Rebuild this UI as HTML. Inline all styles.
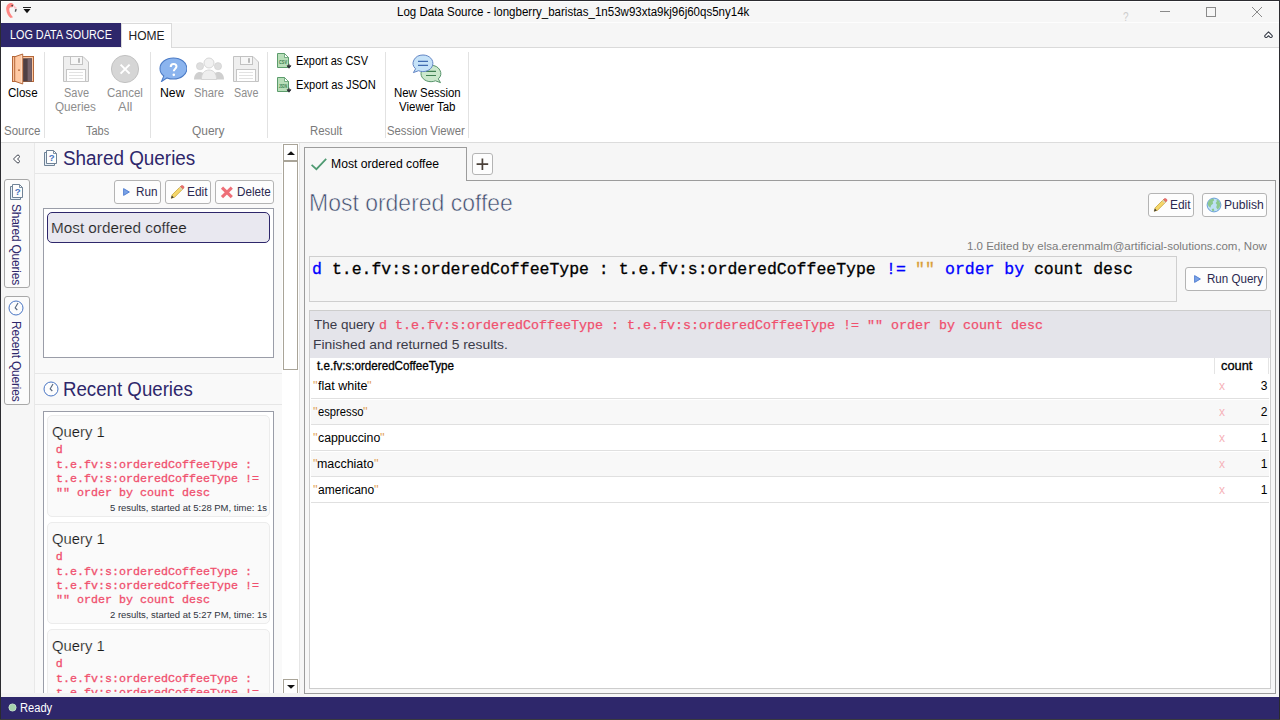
<!DOCTYPE html>
<html lang="en"><head><meta charset="utf-8"><title>Log Data Source</title>
<style>
html,body{margin:0;padding:0;}
body{width:1280px;height:720px;position:relative;overflow:hidden;background:#f6f6f6;font-family:"Liberation Sans",sans-serif;}
body>div,body>svg,body>span{position:absolute;box-sizing:border-box;}
span.t{white-space:pre;display:block;transform-origin:0 50%;}
</style></head>
<body>
<div style="left:0px;top:0px;width:1280px;height:720px;background:#f6f6f6;"></div>
<div style="left:1px;top:1px;width:1278px;height:1px;background:#fff;"></div>
<div style="left:1px;top:1px;width:1px;height:22px;background:#fff;"></div>
<div style="left:121px;top:22px;width:1158px;height:1px;background:#fdfdfd;"></div>
<div style="left:1px;top:23px;width:120px;height:24px;background:#2e276b;"></div>
<div style="left:121px;top:23px;width:51px;height:25px;background:#fff;border:1px solid #dadada;border-bottom:none;"></div>
<div style="left:172px;top:47px;width:1107px;height:1px;background:#dadada;"></div>
<div style="left:1px;top:48px;width:1278px;height:94px;background:#fff;"></div>
<div style="left:1px;top:142px;width:1278px;height:1px;background:#dcdcdc;"></div>
<div style="left:44px;top:52px;width:1px;height:86px;background:#e2e2e2;"></div>
<div style="left:150px;top:52px;width:1px;height:86px;background:#e2e2e2;"></div>
<div style="left:267px;top:52px;width:1px;height:86px;background:#e2e2e2;"></div>
<div style="left:385px;top:52px;width:1px;height:86px;background:#e2e2e2;"></div>
<div style="left:468px;top:52px;width:1px;height:86px;background:#e2e2e2;"></div>
<span class="t m" style="left:397.05px;top:1.84px;font:400 12px/20px 'Liberation Sans', sans-serif;color:#000;transform:scaleX(0.9603);">Log Data Source - longberry_baristas_1n53w93xta9kj96j60qs5ny14k</span>
<span class="t m" style="left:1123.09px;top:6.50px;font:400 13px/20px 'Liberation Sans', sans-serif;color:#cccccc;transform:scaleX(0.7719);">?</span>
<span class="t m" style="left:9.61px;top:24.84px;font:400 12px/20px 'Liberation Sans', sans-serif;color:#fff;transform:scaleX(0.9020);">LOG DATA SOURCE</span>
<span class="t m" style="left:128.52px;top:25.84px;font:400 12px/20px 'Liberation Sans', sans-serif;color:#222;transform:scaleX(1.0000);">HOME</span>
<span class="t m" style="left:7.91px;top:82.84px;font:400 12px/20px 'Liberation Sans', sans-serif;color:#000;transform:scaleX(0.9646);">Close</span>
<span class="t m" style="left:63.50px;top:82.84px;font:400 12px/20px 'Liberation Sans', sans-serif;color:#8d8d8d;transform:scaleX(0.9132);">Save</span>
<span class="t m" style="left:55.45px;top:97.44px;font:400 12px/20px 'Liberation Sans', sans-serif;color:#8d8d8d;transform:scaleX(0.9749);">Queries</span>
<span class="t m" style="left:107.42px;top:82.84px;font:400 12px/20px 'Liberation Sans', sans-serif;color:#8d8d8d;transform:scaleX(0.9597);">Cancel</span>
<span class="t m" style="left:117.97px;top:97.44px;font:400 12px/20px 'Liberation Sans', sans-serif;color:#8d8d8d;transform:scaleX(1.0785);">All</span>
<span class="t m" style="left:160.00px;top:82.84px;font:400 12px/20px 'Liberation Sans', sans-serif;color:#000;transform:scaleX(1.0191);">New</span>
<span class="t m" style="left:194.49px;top:82.84px;font:400 12px/20px 'Liberation Sans', sans-serif;color:#8d8d8d;transform:scaleX(0.9369);">Share</span>
<span class="t m" style="left:234.01px;top:82.84px;font:400 12px/20px 'Liberation Sans', sans-serif;color:#8d8d8d;transform:scaleX(0.8942);">Save</span>
<span class="t m" style="left:295.60px;top:50.84px;font:400 12px/20px 'Liberation Sans', sans-serif;color:#000;transform:scaleX(0.9142);">Export as CSV</span>
<span class="t m" style="left:295.59px;top:74.84px;font:400 12px/20px 'Liberation Sans', sans-serif;color:#000;transform:scaleX(0.9278);">Export as JSON</span>
<span class="t m" style="left:393.56px;top:82.84px;font:400 12px/20px 'Liberation Sans', sans-serif;color:#000;transform:scaleX(0.9521);">New Session</span>
<span class="t m" style="left:398.95px;top:97.44px;font:400 12px/20px 'Liberation Sans', sans-serif;color:#000;transform:scaleX(0.9592);">Viewer Tab</span>
<span class="t m" style="left:3.98px;top:120.84px;font:400 12px/20px 'Liberation Sans', sans-serif;color:#7a7a7a;transform:scaleX(0.9607);">Source</span>
<span class="t m" style="left:86.25px;top:120.84px;font:400 12px/20px 'Liberation Sans', sans-serif;color:#7a7a7a;transform:scaleX(0.9125);">Tabs</span>
<span class="t m" style="left:192.43px;top:120.84px;font:400 12px/20px 'Liberation Sans', sans-serif;color:#7a7a7a;transform:scaleX(0.9970);">Query</span>
<span class="t m" style="left:309.82px;top:120.84px;font:400 12px/20px 'Liberation Sans', sans-serif;color:#7a7a7a;transform:scaleX(0.9486);">Result</span>
<span class="t m" style="left:387.49px;top:120.84px;font:400 12px/20px 'Liberation Sans', sans-serif;color:#7a7a7a;transform:scaleX(0.9418);">Session Viewer</span>
<div style="left:1160px;top:11px;width:10px;height:1px;background:#8a8a8a;"></div>
<div style="left:1206px;top:7px;width:10px;height:10px;border:1px solid #8a8a8a;"></div>
<svg style="left:1251px;top:6px" width="12" height="12" viewBox="0 0 12 12"><path d="M1 1 L11 11 M11 1 L1 11" stroke="#8a8a8a" stroke-width="1" fill="none"/></svg>
<svg style="left:1263px;top:30px" width="11" height="9.3" viewBox="0 0 13 11"><path d="M6.5 2.2 L10.6 6.3 A1.6 1.6 0 0 1 8.2 8.4 L6.5 6.8 L4.8 8.4 A1.6 1.6 0 0 1 2.4 6.3 Z" fill="#fff" stroke="#3a3f4a" stroke-width="1.3" stroke-linejoin="round"/></svg>
<svg style="left:0px;top:0px" width="20" height="22" viewBox="0 0 20 22"><path d="M12.6 3.4 C9.2 2.2 6 5 6.2 9.2 C6.4 13 8.4 16.4 10.6 18 L13 17.2 C10.6 14.6 9.1 11.6 9.3 9.2 C9.4 7.8 10.2 7.3 11.2 7.3 C12.6 7.3 13.8 6.4 13.8 5.2 C13.8 4.3 13.4 3.7 12.6 3.4 Z" fill="#ff8683"/><path d="M13.6 5.2 L16.6 7.4 L16.6 9 L14 8.2 Z" fill="#ffc6cb"/><path d="M15 9.2 L16.8 9 L16.2 11.4 L14.8 12 Z" fill="#555"/><circle cx="12.2" cy="5.6" r="0.85" fill="#4a3a3a"/></svg>
<div style="left:23px;top:7px;width:8px;height:1px;background:#222;"></div>
<svg style="left:23px;top:9px" width="8" height="5" viewBox="0 0 8 5"><path d="M0.5 0 H7.5 L4 4.3 Z" fill="#111"/></svg>
<svg style="left:11px;top:53px" width="24" height="32" viewBox="0 0 24 32"><rect x="1.5" y="3.5" width="21" height="25" fill="#fcc6a0" stroke="#b5683a" stroke-width="1"/><rect x="12" y="5.3" width="9" height="23.2" fill="#4f4044"/><rect x="16.6" y="5.8" width="4.2" height="22.4" fill="#75626a"/><path d="M3.7 3.8 L11.7 1 V31 L3.7 28.2 Z" fill="#ffc9a3" stroke="#b5683a" stroke-width="1" stroke-linejoin="round"/><path d="M10.7 2.2 V29.8" stroke="#ffe2cf" stroke-width="0.8"/><rect x="7.2" y="16.4" width="1.6" height="1.6" fill="#b5683a"/></svg>
<svg style="left:63px;top:56px" width="26" height="26" viewBox="0 0 26 26"><path d="M0.5 0.5 H20 L25.5 6 V25.5 H0.5 Z" fill="#efefef" stroke="#c2c2c2" stroke-width="1"/><rect x="7.5" y="0.5" width="12" height="8" fill="#f7f7f7" stroke="#c2c2c2" stroke-width="1"/><rect x="15" y="2.2" width="2" height="4.6" fill="#b9b9b9"/><rect x="3.5" y="13.5" width="19" height="12" fill="#ffffff" stroke="#c6c6c6" stroke-width="1"/><path d="M6 16.5 H20 M6 19.5 H20 M6 22.5 H20" stroke="#e2e2e2" stroke-width="1"/></svg>
<svg style="left:233px;top:56px" width="26" height="26" viewBox="0 0 26 26"><path d="M0.5 0.5 H20 L25.5 6 V25.5 H0.5 Z" fill="#efefef" stroke="#c2c2c2" stroke-width="1"/><rect x="7.5" y="0.5" width="12" height="8" fill="#f7f7f7" stroke="#c2c2c2" stroke-width="1"/><rect x="15" y="2.2" width="2" height="4.6" fill="#b9b9b9"/><rect x="3.5" y="13.5" width="19" height="12" fill="#ffffff" stroke="#c6c6c6" stroke-width="1"/><path d="M6 16.5 H20 M6 19.5 H20 M6 22.5 H20" stroke="#e2e2e2" stroke-width="1"/></svg>
<svg style="left:110px;top:54px" width="30" height="30" viewBox="0 0 30 30"><circle cx="15" cy="15" r="13.6" fill="#d6d6d6" stroke="#c2c2c2" stroke-width="1"/><path d="M10.6 10.6 L19.6 19.6 M19.6 10.6 L10.6 19.6" stroke="#fff" stroke-width="2" stroke-linecap="butt"/></svg>
<svg style="left:158.6px;top:56.6px" width="28.8" height="25.9" viewBox="0 0 30 27"><path d="M15 1 C22.8 1 29 5.8 29 12 C29 18.2 22.8 23 15 23 C12.6 23 10.4 22.6 8.4 21.8 L2.6 25.6 L5 19.8 C2.4 17.8 1 15 1 12 C1 5.8 7.2 1 15 1 Z" fill="#8bb4ee" stroke="#4b7bc6" stroke-width="1.1"/><path d="M12.2 9.2 C12.2 7.2 13.4 6.2 15.2 6.2 C17 6.2 18.2 7.2 18.2 8.8 C18.2 10.8 15.4 11.2 15.4 13.6" stroke="#fff" stroke-width="2.1" fill="none" stroke-linecap="butt" transform="translate(0,1.2)"/><circle cx="15.4" cy="18.6" r="1.35" fill="#fff"/></svg>
<svg style="left:193px;top:57px" width="32" height="24" viewBox="0 0 32 24"><circle cx="7" cy="9.2" r="3.6" fill="#dedede" stroke="#cfcfcf" stroke-width="0.6"/><circle cx="25" cy="9.2" r="3.6" fill="#dedede" stroke="#cfcfcf" stroke-width="0.6"/><path d="M1 22.5 C1 17.5 3.6 15 7 15 C9 15 10.6 16 11.6 17.6 L11.6 22.5 Z" fill="#cfcfcf"/><path d="M31 22.5 C31 17.5 28.4 15 25 15 C23 15 21.4 16 20.4 17.6 L20.4 22.5 Z" fill="#cfcfcf"/><circle cx="16" cy="6" r="5" fill="#f1f1f1" stroke="#d2d2d2" stroke-width="0.9"/><path d="M8.4 22.5 C8.4 16.2 11.6 13 16 13 C20.4 13 23.6 16.2 23.6 22.5 Z" fill="#eeeeee" stroke="#d2d2d2" stroke-width="0.9"/></svg>
<svg style="left:277px;top:53px" width="16" height="17" viewBox="0 0 16 17"><path d="M0.5 0.5 H7.5 L11.5 4.5 V14.5 H0.5 Z" fill="#b9dfba" stroke="#5c9c6c" stroke-width="1"/><path d="M7.5 0.5 V4.5 H11.5 Z" fill="#ffffff" stroke="#5c9c6c" stroke-width="0.8" stroke-linejoin="round"/><text x="2" y="10.8" font-family="Liberation Sans, sans-serif" font-size="5.6" font-weight="700" fill="#357a48" textLength="8" lengthAdjust="spacingAndGlyphs">CSV</text><path d="M12 10.8 V13 M10 12.8 H14 L12 15.2 Z" stroke="#33363c" stroke-width="0.9" fill="#33363c"/></svg>
<svg style="left:277px;top:77px" width="16" height="17" viewBox="0 0 16 17"><path d="M0.5 0.5 H7.5 L11.5 4.5 V14.5 H0.5 Z" fill="#b9dfba" stroke="#5c9c6c" stroke-width="1"/><path d="M7.5 0.5 V4.5 H11.5 Z" fill="#ffffff" stroke="#5c9c6c" stroke-width="0.8" stroke-linejoin="round"/><text x="2" y="10.8" font-family="Liberation Sans, sans-serif" font-size="5.6" font-weight="700" fill="#357a48" textLength="8" lengthAdjust="spacingAndGlyphs">JSON</text><path d="M12 10.8 V13 M10 12.8 H14 L12 15.2 Z" stroke="#33363c" stroke-width="0.9" fill="#33363c"/></svg>
<svg style="left:412px;top:54px" width="30" height="30" viewBox="0 0 30 30"><path d="M18.9 11.3 A9.9 8.2 0 0 1 26.3 24.9 L28.5 28.6 L23.4 26.8 A9.9 8.2 0 1 1 18.9 11.3 Z" fill="#cbe8cc" stroke="#56936a" stroke-width="1"/><path d="M14 17.4 H24 M14 21.5 H24" stroke="#3f7f52" stroke-width="1.2"/><path d="M11 1 A9.9 8.3 0 1 1 6.5 16.7 L1.4 18.6 L3.6 14.8 A9.9 8.3 0 0 1 11 1 Z" fill="#c5e2f8" stroke="#6285c4" stroke-width="1"/><path d="M6 7.4 H16 M6 11.4 H16" stroke="#3f6ab0" stroke-width="1.2"/></svg>
<div style="left:1px;top:143px;width:34px;height:554px;background:#f6f6f6;"></div>
<div style="left:35px;top:143px;width:247px;height:554px;background:#f9f9f9;"></div>
<div style="left:34px;top:143px;width:1px;height:554px;background:#e8e8e8;"></div>
<div style="left:35px;top:173px;width:247px;height:1px;background:#e6e6e6;"></div>
<div style="left:35px;top:373px;width:247px;height:1px;background:#e6e6e6;"></div>
<div style="left:35px;top:404px;width:247px;height:1px;background:#e6e6e6;"></div>
<svg style="left:11.5px;top:154px" width="9" height="10" viewBox="0 0 10 11"><path d="M1.6 5.5 L5.6 1.6 A1.5 1.5 0 0 1 7.8 3.8 L6.2 5.5 L7.8 7.2 A1.5 1.5 0 0 1 5.6 9.4 Z" fill="#fff" stroke="#3a3f4a" stroke-width="1.1" stroke-linejoin="round"/></svg>
<div style="left:4px;top:179px;width:26px;height:109px;background:#fbfbfb;border:1px solid #a8a8a8;border-radius:3px;"></div>
<div style="left:4px;top:296px;width:26px;height:109px;background:#fbfbfb;border:1px solid #a8a8a8;border-radius:3px;"></div>
<svg style="left:10px;top:184px" width="14" height="16" viewBox="0 0 14 16"><path d="M2.5 2.5 H0.5 V15.5 H10.5 V13.5" fill="#e8f0f8" stroke="#6f8296" stroke-width="1"/><path d="M2.5 0.5 H9.5 L12.5 3.5 V13.5 H2.5 Z" fill="#fdfdfd" stroke="#6f8296" stroke-width="1"/><path d="M9.5 0.5 V3.5 H12.5" fill="none" stroke="#6f8296" stroke-width="0.9"/><text x="7.7" y="11.4" font-family="Liberation Sans, sans-serif" font-size="9.6" font-weight="700" fill="#4a74c0" text-anchor="middle">?</text></svg>
<svg style="left:44px;top:150px" width="14" height="16" viewBox="0 0 14 16"><path d="M2.5 2.5 H0.5 V15.5 H10.5 V13.5" fill="#e8f0f8" stroke="#6f8296" stroke-width="1"/><path d="M2.5 0.5 H9.5 L12.5 3.5 V13.5 H2.5 Z" fill="#fdfdfd" stroke="#6f8296" stroke-width="1"/><path d="M9.5 0.5 V3.5 H12.5" fill="none" stroke="#6f8296" stroke-width="0.9"/><text x="7.7" y="11.4" font-family="Liberation Sans, sans-serif" font-size="9.6" font-weight="700" fill="#4a74c0" text-anchor="middle">?</text></svg>
<svg style="left:8px;top:300px" width="16" height="16" viewBox="0 0 16 16"><circle cx="8" cy="8" r="7" fill="#fdfdfd" stroke="#4a76c4" stroke-width="1"/><path d="M10 3 L7.2 7.8 L9.3 10" fill="none" stroke="#5a6a80" stroke-width="1.2"/></svg>
<svg style="left:42.5px;top:380.5px" width="16" height="16" viewBox="0 0 16 16"><circle cx="8" cy="8" r="7" fill="#fdfdfd" stroke="#4a76c4" stroke-width="1"/><path d="M10 3 L7.2 7.8 L9.3 10" fill="none" stroke="#5a6a80" stroke-width="1.2"/></svg>
<span class="t" id="v1" style="left:12px;top:204px;font:400 12px/20px 'Liberation Sans', sans-serif;color:#2e276b;transform-origin:0 0;transform:translate(14.2px,0) rotate(90deg);letter-spacing:-0.22px;">Shared Queries</span>
<span class="t" id="v2" style="left:12px;top:321.3px;font:400 12px/20px 'Liberation Sans', sans-serif;color:#2e276b;transform-origin:0 0;transform:translate(14.2px,0) rotate(90deg);letter-spacing:-0.2px;">Recent Queries</span>
<span class="t m" style="left:62.89px;top:148.37px;font:400 20px/20px 'Liberation Sans', sans-serif;color:#2e276b;transform:scaleX(0.9444);">Shared Queries</span>
<span class="t m" style="left:62.72px;top:379.37px;font:400 20px/20px 'Liberation Sans', sans-serif;color:#2e276b;transform:scaleX(0.9337);">Recent Queries</span>
<div style="left:114px;top:180px;width:47px;height:24px;background:#fdfdfd;border:1px solid #b4b4b4;border-radius:3px;"></div>
<div style="left:165px;top:180px;width:46px;height:24px;background:#fdfdfd;border:1px solid #b4b4b4;border-radius:3px;"></div>
<div style="left:215px;top:180px;width:59px;height:24px;background:#fdfdfd;border:1px solid #b4b4b4;border-radius:3px;"></div>
<svg style="left:123px;top:188px" width="7" height="8" viewBox="0 0 7 8"><path d="M0.6 0.6 L6.4 4 L0.6 7.4 Z" fill="#7aa2e6" stroke="#4d7cd0" stroke-width="0.9" stroke-linejoin="round"/></svg>
<svg style="left:169.5px;top:185px" width="15" height="14" viewBox="0 0 15 14"><path d="M1.2 13.2 L2.2 9.8 L10.6 1.4 L13 3.8 L4.6 12.2 Z" fill="#f5d76a" stroke="#c9a63c" stroke-width="0.8" stroke-linejoin="round"/><path d="M10.6 1.4 L11.6 0.6 Q12.6 0.2 13.6 1.2 Q14.4 2 13.8 3 L13 3.8 Z" fill="#ee6d6d" stroke="#c85050" stroke-width="0.5"/><path d="M9.6 2.4 L12 4.8" stroke="#cfcfcf" stroke-width="1.2"/><path d="M1 13.6 L1.9 10.6 L3.8 12.6 Z" fill="#3a3a3a"/></svg>
<svg style="left:220px;top:185.5px" width="14" height="13" viewBox="0 0 14 13"><path d="M2 1.6 L11.8 11.2 M11.8 1.6 L2 11.2" stroke="#ee6f78" stroke-width="3.1" stroke-linecap="butt"/></svg>
<span class="t m" style="left:135.54px;top:182.14px;font:400 12px/20px 'Liberation Sans', sans-serif;color:#2b2950;transform:scaleX(0.9777);">Run</span>
<span class="t m" style="left:186.52px;top:182.14px;font:400 12px/20px 'Liberation Sans', sans-serif;color:#2b2950;transform:scaleX(0.9941);">Edit</span>
<span class="t m" style="left:236.79px;top:182.14px;font:400 12px/20px 'Liberation Sans', sans-serif;color:#2b2950;transform:scaleX(0.9723);">Delete</span>
<div style="left:43px;top:208px;width:231px;height:150px;background:#fff;border:1px solid #9a9da8;"></div>
<div style="left:47px;top:212px;width:222.7px;height:31px;background:#e9e8f0;border:1px solid #2e276b;border-radius:5px;"></div>
<span class="t m" style="left:51.00px;top:218.30px;font:400 15px/20px 'Liberation Sans', sans-serif;color:#222222;transform:scaleX(1.0191);-webkit-text-stroke:0.18px #e9e8f0;">Most ordered coffee</span>
<div style="left:43px;top:411px;width:231px;height:290px;background:#fff;border:1px solid #9a9da8;"></div>
<div style="left:47px;top:415px;width:223px;height:102px;background:#fafafa;border:1px solid #ececec;border-radius:5px;"></div>
<span class="t m" style="left:51.80px;top:422.05px;font:400 15px/20px 'Liberation Sans', sans-serif;color:#1c1c1c;transform:scaleX(0.9872);-webkit-text-stroke:0.18px #fafafa;">Query 1</span>
<span class="t m" style="left:55.70px;top:440.39px;font:400 11.67px/20px 'Liberation Mono', monospace;color:#f0506e;transform:scaleX(1.0000);-webkit-text-stroke:0.3px #f0506e;">d</span>
<span class="t m" style="left:55.70px;top:454.64px;font:400 11.67px/20px 'Liberation Mono', monospace;color:#f0506e;transform:scaleX(1.0007);-webkit-text-stroke:0.3px #f0506e;">t.e.fv:s:orderedCoffeeType :</span>
<span class="t m" style="left:55.70px;top:468.64px;font:400 11.67px/20px 'Liberation Mono', monospace;color:#f0506e;transform:scaleX(1.0007);-webkit-text-stroke:0.3px #f0506e;">t.e.fv:s:orderedCoffeeType !=</span>
<span class="t m" style="left:55.70px;top:482.89px;font:400 11.67px/20px 'Liberation Mono', monospace;color:#f0506e;transform:scaleX(1.0007);-webkit-text-stroke:0.3px #f0506e;">"" order by count desc</span>
<span class="t m" style="left:109.62px;top:497.67px;font:400 9.6px/20px 'Liberation Sans', sans-serif;color:#2f3340;transform:scaleX(0.9878);">5 results, started at 5:28 PM, time: 1s</span>
<div style="left:47px;top:522px;width:223px;height:102px;background:#fafafa;border:1px solid #ececec;border-radius:5px;"></div>
<span class="t m" style="left:51.80px;top:529.05px;font:400 15px/20px 'Liberation Sans', sans-serif;color:#1c1c1c;transform:scaleX(0.9872);-webkit-text-stroke:0.18px #fafafa;">Query 1</span>
<span class="t m" style="left:55.70px;top:547.39px;font:400 11.67px/20px 'Liberation Mono', monospace;color:#f0506e;transform:scaleX(1.0000);-webkit-text-stroke:0.3px #f0506e;">d</span>
<span class="t m" style="left:55.70px;top:561.64px;font:400 11.67px/20px 'Liberation Mono', monospace;color:#f0506e;transform:scaleX(1.0007);-webkit-text-stroke:0.3px #f0506e;">t.e.fv:s:orderedCoffeeType :</span>
<span class="t m" style="left:55.70px;top:575.64px;font:400 11.67px/20px 'Liberation Mono', monospace;color:#f0506e;transform:scaleX(1.0007);-webkit-text-stroke:0.3px #f0506e;">t.e.fv:s:orderedCoffeeType !=</span>
<span class="t m" style="left:55.70px;top:589.89px;font:400 11.67px/20px 'Liberation Mono', monospace;color:#f0506e;transform:scaleX(1.0007);-webkit-text-stroke:0.3px #f0506e;">"" order by count desc</span>
<span class="t m" style="left:109.52px;top:604.67px;font:400 9.6px/20px 'Liberation Sans', sans-serif;color:#2f3340;transform:scaleX(0.9884);">2 results, started at 5:27 PM, time: 1s</span>
<div style="left:47px;top:629px;width:223px;height:102px;background:#fafafa;border:1px solid #ececec;border-radius:5px;"></div>
<span class="t m" style="left:51.80px;top:636.05px;font:400 15px/20px 'Liberation Sans', sans-serif;color:#1c1c1c;transform:scaleX(0.9872);-webkit-text-stroke:0.18px #fafafa;">Query 1</span>
<span class="t m" style="left:55.70px;top:654.39px;font:400 11.67px/20px 'Liberation Mono', monospace;color:#f0506e;transform:scaleX(1.0000);-webkit-text-stroke:0.3px #f0506e;">d</span>
<span class="t m" style="left:55.70px;top:668.64px;font:400 11.67px/20px 'Liberation Mono', monospace;color:#f0506e;transform:scaleX(1.0007);-webkit-text-stroke:0.3px #f0506e;">t.e.fv:s:orderedCoffeeType :</span>
<span class="t m" style="left:55.70px;top:682.64px;font:400 11.67px/20px 'Liberation Mono', monospace;color:#f0506e;transform:scaleX(1.0007);-webkit-text-stroke:0.3px #f0506e;">t.e.fv:s:orderedCoffeeType !=</span>
<span class="t m" style="left:55.70px;top:696.89px;font:400 11.67px/20px 'Liberation Mono', monospace;color:#f0506e;transform:scaleX(1.0007);-webkit-text-stroke:0.3px #f0506e;">"" order by count desc</span>
<span class="t m" style="left:109.52px;top:711.67px;font:400 9.6px/20px 'Liberation Sans', sans-serif;color:#2f3340;transform:scaleX(0.9884);">2 results, started at 5:26 PM, time: 1s</span>
<div style="left:282px;top:143px;width:18px;height:554px;background:#fff;"></div>
<div style="left:283px;top:144px;width:15px;height:17px;background:#fff;border:1px solid #a9a498;"></div>
<div style="left:283px;top:161px;width:15px;height:209px;background:#fff;border:1px solid #a9a498;"></div>
<div style="left:283px;top:679px;width:15px;height:17px;background:#fff;border:1px solid #a9a498;"></div>
<svg style="left:287px;top:150.5px" width="8" height="4" viewBox="0 0 9 5" preserveAspectRatio="none"><path d="M0 5 H9 L4.5 0.3 Z" fill="#111"/></svg>
<svg style="left:287px;top:685px" width="8" height="4" viewBox="0 0 9 5" preserveAspectRatio="none"><path d="M0 0 H9 L4.5 4.7 Z" fill="#111"/></svg>
<div style="left:299px;top:143px;width:1px;height:554px;background:#e6e6e6;"></div>
<div style="left:1px;top:693px;width:303px;height:4px;background:#f3f3f3;"></div>
<div style="left:1px;top:697px;width:1278px;height:22px;background:#2e276b;"></div>
<svg style="left:8px;top:703px" width="9" height="9" viewBox="0 0 9 9"><circle cx="4.5" cy="4.5" r="3.6" fill="#a5d3ac" stroke="#cfe8d3" stroke-width="0.8"/></svg>
<span class="t m" style="left:19.59px;top:697.84px;font:400 12px/20px 'Liberation Sans', sans-serif;color:#fff;transform:scaleX(0.9279);">Ready</span>
<div style="left:304px;top:180px;width:972px;height:514px;background:#f7f7f7;border:1px solid #9c9c9c;"></div>
<div style="left:304px;top:147px;width:163px;height:34px;background:#f7f7f7;border:1px solid #9c9c9c;border-bottom:none;"></div>
<svg style="left:310px;top:157px" width="18" height="14" viewBox="0 0 18 14"><path d="M1.6 7.8 L6.4 12.2 L16.2 1.8" fill="none" stroke="#4f9a72" stroke-width="1.7"/></svg>
<span class="t m" style="left:330.50px;top:153.84px;font:400 12px/20px 'Liberation Sans', sans-serif;color:#000;transform:scaleX(1.0143);">Most ordered coffee</span>
<div style="left:472px;top:153px;width:21px;height:22px;background:#fdfdfd;border:1px solid #b4b4b4;border-radius:3px;"></div>
<svg style="left:476px;top:158px" width="13" height="13" viewBox="0 0 13 13"><path d="M6.4 0.4 V12 M0.6 6.2 H12.2" stroke="#4a4038" stroke-width="1.7"/></svg>
<span class="t m" style="left:308.72px;top:192.68px;font:400 24px/20px 'Liberation Sans', sans-serif;color:#3f4c6e;transform:scaleX(0.9572);-webkit-text-stroke:0.55px #f7f7f7;">Most ordered coffee</span>
<div style="left:1148px;top:193px;width:46px;height:24px;background:#fdfdfd;border:1px solid #b4b4b4;border-radius:3px;"></div>
<div style="left:1202px;top:193px;width:65px;height:24px;background:#fdfdfd;border:1px solid #b4b4b4;border-radius:3px;"></div>
<svg style="left:1152.5px;top:198px" width="15" height="14" viewBox="0 0 15 14"><path d="M1.2 13.2 L2.2 9.8 L10.6 1.4 L13 3.8 L4.6 12.2 Z" fill="#f5d76a" stroke="#c9a63c" stroke-width="0.8" stroke-linejoin="round"/><path d="M10.6 1.4 L11.6 0.6 Q12.6 0.2 13.6 1.2 Q14.4 2 13.8 3 L13 3.8 Z" fill="#ee6d6d" stroke="#c85050" stroke-width="0.5"/><path d="M9.6 2.4 L12 4.8" stroke="#cfcfcf" stroke-width="1.2"/><path d="M1 13.6 L1.9 10.6 L3.8 12.6 Z" fill="#3a3a3a"/></svg>
<svg style="left:1205.5px;top:196.5px" width="16" height="16" viewBox="0 0 16 16"><circle cx="8" cy="8" r="6.9" fill="#bfe0f6" stroke="#6aa0d8" stroke-width="1"/><path d="M3 3.6 Q5 2 7.4 1.6 L8.2 3.2 L6.6 4.8 L7.2 6.6 L5.2 8.2 L4.4 10.8 L2.4 9 L1.6 6.4 Z" fill="#8cc88e"/><path d="M10.4 2.4 L12.8 3.8 L14.4 6.8 L13.6 10.4 L11.6 12.6 L10.2 10.2 L11 7.8 L9.6 6 L10.8 4.6 Z" fill="#8cc88e"/><path d="M5.6 12 L7.6 11.4 L8.4 13.6 L6.6 14.4 Z" fill="#8cc88e"/></svg>
<span class="t m" style="left:1169.52px;top:195.14px;font:400 12px/20px 'Liberation Sans', sans-serif;color:#2b2950;transform:scaleX(0.9941);">Edit</span>
<span class="t m" style="left:1223.51px;top:195.14px;font:400 12px/20px 'Liberation Sans', sans-serif;color:#2b2950;transform:scaleX(1.0108);">Publish</span>
<span class="t m" style="left:966.87px;top:236.19px;font:400 11px/20px 'Liberation Sans', sans-serif;color:#7b7b7b;transform:scaleX(1.0451);">1.0 Edited by elsa.erenmalm@artificial-solutions.com, Now</span>
<div style="left:309px;top:256px;width:868px;height:46px;background:#f6f6f6;border:1px solid #cfcfcf;"></div>
<span class="t m" style="left:312.00px;top:259.60px;font:400 16.5px/20px 'Liberation Mono', monospace;color:#0000ff;transform:scaleX(0.9982);-webkit-text-stroke:0.3px #0000ff;">d</span>
<span class="t m" style="left:321.89px;top:259.60px;font:400 16.5px/20px 'Liberation Mono', monospace;color:#000;transform:scaleX(0.9986);-webkit-text-stroke:0.3px #000;"> t.e.fv:s:orderedCoffeeType : t.e.fv:s:orderedCoffeeType </span>
<span class="t m" style="left:885.50px;top:259.60px;font:400 16.5px/20px 'Liberation Mono', monospace;color:#0000ff;transform:scaleX(0.9982);-webkit-text-stroke:0.3px #0000ff;">!=</span>
<span class="t m" style="left:905.28px;top:259.60px;font:400 16.5px/20px 'Liberation Mono', monospace;color:#000;transform:scaleX(0.9982);-webkit-text-stroke:0.3px #000;"> </span>
<span class="t m" style="left:915.17px;top:259.60px;font:400 16.5px/20px 'Liberation Mono', monospace;color:#d9a03c;transform:scaleX(0.9982);-webkit-text-stroke:0.3px #d9a03c;">""</span>
<span class="t m" style="left:934.94px;top:259.60px;font:400 16.5px/20px 'Liberation Mono', monospace;color:#000;transform:scaleX(0.9982);-webkit-text-stroke:0.3px #000;"> </span>
<span class="t m" style="left:944.83px;top:259.60px;font:400 16.5px/20px 'Liberation Mono', monospace;color:#0000ff;transform:scaleX(0.9986);-webkit-text-stroke:0.3px #0000ff;">order by</span>
<span class="t m" style="left:1023.94px;top:259.60px;font:400 16.5px/20px 'Liberation Mono', monospace;color:#000;transform:scaleX(0.9986);-webkit-text-stroke:0.3px #000;"> count desc</span>
<div style="left:1185px;top:267px;width:82px;height:24px;background:#fdfdfd;border:1px solid #b4b4b4;border-radius:3px;"></div>
<svg style="left:1194px;top:275px" width="7" height="8" viewBox="0 0 7 8"><path d="M0.6 0.6 L6.4 4 L0.6 7.4 Z" fill="#7aa2e6" stroke="#4d7cd0" stroke-width="0.9" stroke-linejoin="round"/></svg>
<span class="t m" style="left:1206.55px;top:269.14px;font:400 12px/20px 'Liberation Sans', sans-serif;color:#2b2950;transform:scaleX(0.9645);">Run Query</span>
<div style="left:309px;top:310px;width:962px;height:379px;background:#fff;border:1px solid #cdcdcd;"></div>
<div style="left:310px;top:311px;width:960px;height:47px;background:#e4e4ea;"></div>
<span class="t m" style="left:314.20px;top:315.20px;font:400 13px/20px 'Liberation Sans', sans-serif;color:#3a3a48;transform:scaleX(1.0347);">The query</span>
<span class="t m" style="left:379.00px;top:316.05px;font:400 13.33px/20px 'Liberation Mono', monospace;color:#f0506e;transform:scaleX(1.0002);-webkit-text-stroke:0.25px #f0506e;">d t.e.fv:s:orderedCoffeeType : t.e.fv:s:orderedCoffeeType != "" order by count desc</span>
<span class="t m" style="left:313.36px;top:334.50px;font:400 13px/20px 'Liberation Sans', sans-serif;color:#3a3a48;transform:scaleX(1.0660);">Finished and returned 5 results.</span>
<span class="t m" style="left:317.32px;top:355.64px;font:400 12px/20px 'Liberation Sans', sans-serif;color:#000;transform:scaleX(0.9698);-webkit-text-stroke:0.3px #000;">t.e.fv:s:orderedCoffeeType</span>
<span class="t m" style="left:1220.70px;top:355.64px;font:400 12px/20px 'Liberation Sans', sans-serif;color:#000;transform:scaleX(1.0691);-webkit-text-stroke:0.3px #000;">count</span>
<div style="left:1214px;top:358px;width:1px;height:16px;background:#e4e4e4;"></div>
<div style="left:1268px;top:358px;width:1px;height:16px;background:#e4e4e4;"></div>
<div style="left:311px;top:398px;width:958px;height:1px;background:#e0e0e0;"></div>
<span class="t m" style="left:312.95px;top:375.84px;font:400 12px/20px 'Liberation Sans', sans-serif;color:#e2a35a;transform:scaleX(1.0782);">"</span>
<span class="t m" style="left:318.07px;top:375.84px;font:400 12px/20px 'Liberation Sans', sans-serif;color:#000;transform:scaleX(1.0449);">flat white</span>
<span class="t m" style="left:367.35px;top:375.84px;font:400 12px/20px 'Liberation Sans', sans-serif;color:#e2a35a;transform:scaleX(1.0782);">"</span>
<span class="t m" style="left:1218.86px;top:375.67px;font:400 12.5px/20px 'Liberation Sans', sans-serif;color:#f6b3ba;transform:scaleX(0.9623);">x</span>
<span class="t m" style="left:1260.80px;top:375.84px;font:400 12px/20px 'Liberation Sans', sans-serif;color:#000;">3</span>
<div style="left:311px;top:400px;width:958px;height:25px;background:#f8f8f8;"></div>
<div style="left:311px;top:424px;width:958px;height:1px;background:#e0e0e0;"></div>
<span class="t m" style="left:312.95px;top:401.84px;font:400 12px/20px 'Liberation Sans', sans-serif;color:#e2a35a;transform:scaleX(1.0782);">"</span>
<span class="t m" style="left:317.77px;top:401.84px;font:400 12px/20px 'Liberation Sans', sans-serif;color:#000;transform:scaleX(0.9363);">espresso</span>
<span class="t m" style="left:363.25px;top:401.84px;font:400 12px/20px 'Liberation Sans', sans-serif;color:#e2a35a;transform:scaleX(1.0782);">"</span>
<span class="t m" style="left:1218.86px;top:401.67px;font:400 12.5px/20px 'Liberation Sans', sans-serif;color:#f6b3ba;transform:scaleX(0.9623);">x</span>
<span class="t m" style="left:1260.80px;top:401.84px;font:400 12px/20px 'Liberation Sans', sans-serif;color:#000;">2</span>
<div style="left:311px;top:450px;width:958px;height:1px;background:#e0e0e0;"></div>
<span class="t m" style="left:312.95px;top:427.84px;font:400 12px/20px 'Liberation Sans', sans-serif;color:#e2a35a;transform:scaleX(1.0782);">"</span>
<span class="t m" style="left:317.73px;top:427.84px;font:400 12px/20px 'Liberation Sans', sans-serif;color:#000;transform:scaleX(1.0259);">cappuccino</span>
<span class="t m" style="left:379.85px;top:427.84px;font:400 12px/20px 'Liberation Sans', sans-serif;color:#e2a35a;transform:scaleX(1.0782);">"</span>
<span class="t m" style="left:1218.86px;top:427.67px;font:400 12.5px/20px 'Liberation Sans', sans-serif;color:#f6b3ba;transform:scaleX(0.9623);">x</span>
<span class="t m" style="left:1260.80px;top:427.84px;font:400 12px/20px 'Liberation Sans', sans-serif;color:#000;">1</span>
<div style="left:311px;top:452px;width:958px;height:25px;background:#f8f8f8;"></div>
<div style="left:311px;top:476px;width:958px;height:1px;background:#e0e0e0;"></div>
<span class="t m" style="left:312.95px;top:453.84px;font:400 12px/20px 'Liberation Sans', sans-serif;color:#e2a35a;transform:scaleX(1.0782);">"</span>
<span class="t m" style="left:317.43px;top:453.84px;font:400 12px/20px 'Liberation Sans', sans-serif;color:#000;transform:scaleX(1.0346);">macchiato</span>
<span class="t m" style="left:373.85px;top:453.84px;font:400 12px/20px 'Liberation Sans', sans-serif;color:#e2a35a;transform:scaleX(1.0782);">"</span>
<span class="t m" style="left:1218.86px;top:453.67px;font:400 12.5px/20px 'Liberation Sans', sans-serif;color:#f6b3ba;transform:scaleX(0.9623);">x</span>
<span class="t m" style="left:1260.80px;top:453.84px;font:400 12px/20px 'Liberation Sans', sans-serif;color:#000;">1</span>
<div style="left:311px;top:502px;width:958px;height:1px;background:#e0e0e0;"></div>
<span class="t m" style="left:312.95px;top:479.84px;font:400 12px/20px 'Liberation Sans', sans-serif;color:#e2a35a;transform:scaleX(1.0782);">"</span>
<span class="t m" style="left:317.74px;top:479.84px;font:400 12px/20px 'Liberation Sans', sans-serif;color:#000;transform:scaleX(1.0042);">americano</span>
<span class="t m" style="left:373.85px;top:479.84px;font:400 12px/20px 'Liberation Sans', sans-serif;color:#e2a35a;transform:scaleX(1.0782);">"</span>
<span class="t m" style="left:1218.86px;top:479.67px;font:400 12.5px/20px 'Liberation Sans', sans-serif;color:#f6b3ba;transform:scaleX(0.9623);">x</span>
<span class="t m" style="left:1260.80px;top:479.84px;font:400 12px/20px 'Liberation Sans', sans-serif;color:#000;">1</span>
<div style="left:0px;top:0px;width:1280px;height:1px;background:#2b2b30;"></div>
<div style="left:0px;top:0px;width:1px;height:720px;background:#2b2b30;"></div>
<div style="left:1279px;top:0px;width:1px;height:720px;background:#2b2b30;"></div>
<div style="left:0px;top:719px;width:1280px;height:1px;background:#3a3a3e;"></div>
</body></html>
